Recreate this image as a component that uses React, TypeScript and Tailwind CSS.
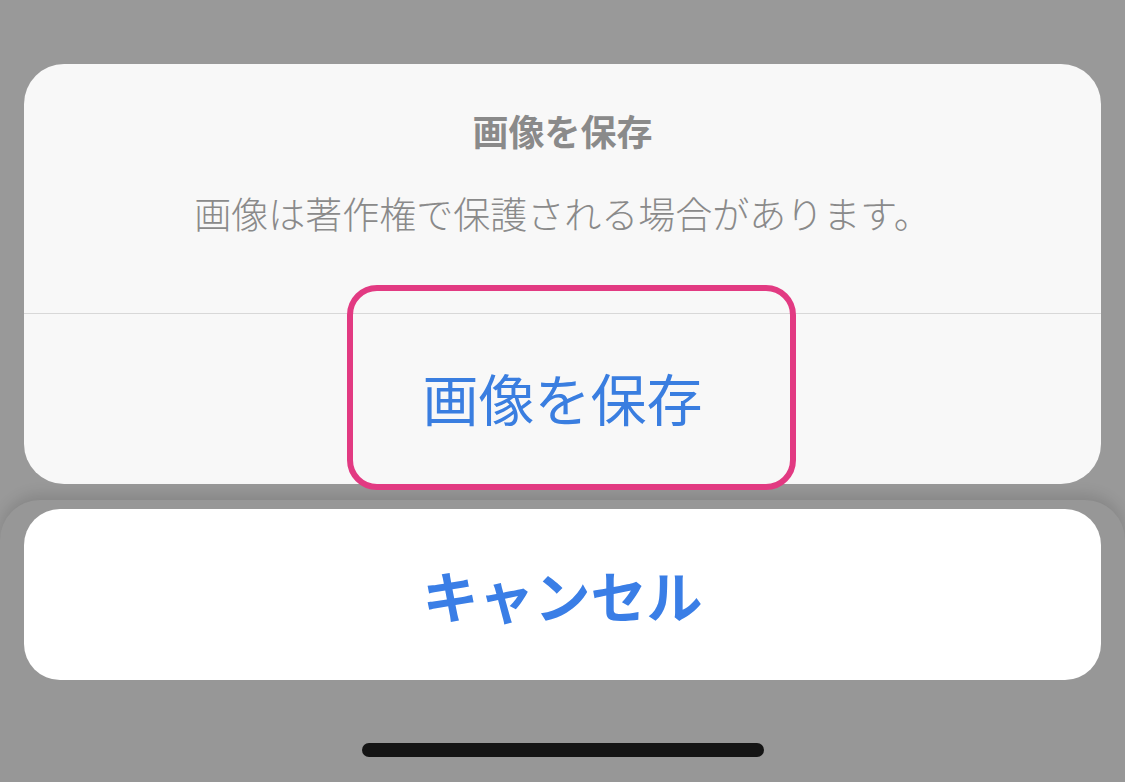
import React from "react";

const jp = { fontFamily: '"Noto Sans CJK JP", "Noto Sans", sans-serif' };

export default function App() {
  return (
    <div
      className="relative flex h-[782px] w-[1125px] flex-col overflow-hidden bg-[#999999]"
      style={jp}
    >
      {/* Alert card */}
      <div className="px-[24px] pt-[64px]">
        <div className="flex h-[420px] flex-col rounded-[40px] bg-[#f8f8f8]">
          <h2 className="pt-[46px] text-center text-[36px] font-bold leading-[40px] text-[#8a8a8a]">
            画像を保存
          </h2>
          <p className="mt-[43px] text-center text-[37px] font-light leading-[40px] text-[#8a8a8a]">
            画像は著作権で保護される場合があります。
          </p>
          <div className="mt-[80px] h-px bg-[#d8d8d8]" />
          <button className="flex flex-1 items-center justify-center pb-[4px] text-[56px] leading-none text-[#3a7ee0]">
            画像を保存
          </button>
        </div>
      </div>

      {/* Bottom sheet with cancel */}
      <div className="mt-[16px] flex flex-1 flex-col items-center rounded-t-[40px] bg-[#979797] px-[24px] pt-[9px] shadow-[0_-6px_14px_rgba(0,0,0,0.12)]">
        <button className="flex h-[171px] w-full items-center justify-center rounded-[36px] bg-white pb-[2px] text-[56px] font-bold leading-none text-[#3a7ee6]">
          キャンセル
        </button>
        <div className="mt-[63px] h-[14px] w-[402px] rounded-full bg-[#141414]" />
      </div>

      {/* Highlight annotation */}
      <div className="pointer-events-none absolute left-[347px] top-[285px] h-[205px] w-[449px] rounded-[30px] border-[6px] border-[#e23a82]" />
    </div>
  );
}
